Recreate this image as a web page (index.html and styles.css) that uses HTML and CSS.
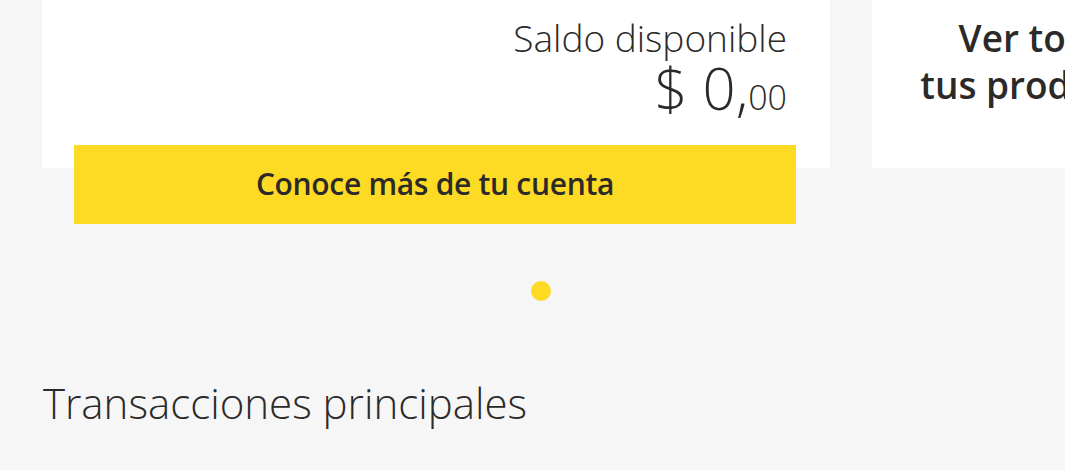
FILE: index.html
```html
<!DOCTYPE html>
<html lang="es">
<head>
<meta charset="utf-8">
<link rel="stylesheet" href="styles.css">
</head>
<body>
<div class="carousel">
  <div class="slide">
    <div class="card card-main">
      <div class="label">Saldo disponible</div>
      <div class="amount">$ 0,<span class="cents">00</span></div>
    </div>
    <button class="cta">Conoce más de tu cuenta</button>
  </div>
  <div class="card card-all">
    <div class="all-text">Ver todos<br>tus productos</div>
  </div>
</div>
<div class="dots"><span class="dot"></span></div>
<h2 class="section-title">Transacciones principales</h2>
</body>
</html>
```
FILE: styles.css
```css
html, body {
  margin: 0;
  padding: 0;
  background: #f6f6f6;
  width: 1065px;
  height: 470px;
  overflow: hidden;
  font-family: "Open Sans", sans-serif;
  color: #2c2a29;
}
.carousel {
  display: flex;
  gap: 42px;
  padding-left: 42px;
  align-items: flex-start;
}
.slide {
  width: 788px;
  flex: none;
  display: flex;
  flex-direction: column;
}
.card {
  background: #fff;
  height: 168px;
  box-sizing: border-box;
}
.card-main {
  text-align: right;
  padding: 13px 43px 0 0;
}
.label {
  font-weight: 300;
  font-size: 37px;
  line-height: 50px;
}
.amount {
  font-weight: 300;
  font-size: 58px;
  line-height: 49px;
}
.cents {
  font-size: 34px;
}
.cta {
  margin: -23px 0 0 32px;
  width: 722px;
  height: 79px;
  border: none;
  background: #fdda24;
  font-family: "Open Sans", sans-serif;
  font-weight: 600;
  font-size: 30px;
  letter-spacing: -0.3px;
  color: #2c2a29;
  padding: 0 0 2px;
}
.card-all {
  width: 352px;
  flex: none;
  display: flex;
  justify-content: center;
  padding-top: 14px;
}
.all-text {
  text-align: center;
  font-weight: 600;
  font-size: 37px;
  line-height: 47px;
  margin-left: -8px;
}
.dots {
  display: flex;
  justify-content: center;
  padding: 57px 0 0 17px;
}
.dot {
  width: 20px;
  height: 20px;
  border-radius: 50%;
  background: #fdda24;
}
.section-title {
  margin: 73px 0 0 43px;
  font-weight: 300;
  font-size: 42px;
  line-height: 58px;
}
```
